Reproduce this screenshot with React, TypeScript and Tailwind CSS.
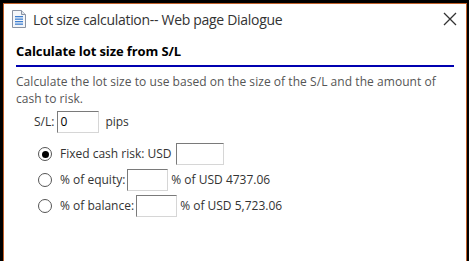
import React from "react";

const font = { fontFamily: '"Open Sans", "Noto Sans", sans-serif' };

function DocIcon() {
  return (
    <svg width="14" height="18" viewBox="0 0 14 18">
      <path d="M0.5 0.5 H9.5 L13.5 4.5 V17.5 H0.5 Z" fill="#f4f6f9" stroke="#8a93a3" />
      <path d="M9.5 0.5 V4.5 H13.5" fill="#dfe4ea" stroke="#8a93a3" />
      <rect x="3" y="6" width="8" height="1.3" fill="#3f7fd0" />
      <rect x="3" y="8.5" width="8" height="1.3" fill="#3f7fd0" />
      <rect x="3" y="11" width="8" height="1.3" fill="#3f7fd0" />
      <rect x="3" y="13.5" width="8" height="1.3" fill="#3f7fd0" />
    </svg>
  );
}

function CloseIcon() {
  return (
    <svg width="14" height="14" viewBox="0 0 14 14">
      <path d="M1 1 L13 13 M13 1 L1 13" stroke="#333" strokeWidth="1.3" />
    </svg>
  );
}

function Box({ w }: { w: string }) {
  return (
    <div
      className={`${w} h-[22px] bg-white border border-t-[#7a7a7a] border-l-[#7a7a7a] border-r-[#d6d6d6] border-b-[#d6d6d6]`}
    />
  );
}

function Radio({ checked }: { checked?: boolean }) {
  return (
    <div className="w-[14px] h-[14px] rounded-full border border-[#555] bg-white flex items-center justify-center">
      {checked && <div className="w-[7px] h-[7px] rounded-full bg-black" />}
    </div>
  );
}

export default function App() {
  return (
    <div className="w-[469px] h-[261px] bg-black overflow-hidden pt-[3px] pl-[3px]" style={font}>
      <div className="w-[464px] h-[270px] bg-white border border-[#c0602a]">
        <div className="h-[30px] flex items-center pl-[8px] pr-[9px]">
          <DocIcon />
          <span className="ml-[7px] text-[14px] text-[#333] tracking-[-0.3px]">
            Lot size calculation-- Web page Dialogue
          </span>
          <div className="ml-auto">
            <CloseIcon />
          </div>
        </div>
        <div className="pl-[12px] pr-[12px] pt-[8px]">
          <div className="text-[13px] font-bold text-black leading-[18px] tracking-[-0.1px]">
            Calculate lot size from S/L
          </div>
          <div className="h-[2px] bg-[#0000b0] mt-[5px]" />
          <div className="mt-[6px] text-[12px] leading-[17px] text-[#555] tracking-[0.05px]">
            Calculate the lot size to use based on the size of the S/L and the amount of cash to risk.
          </div>
          <div className="mt-[4px] pl-[18px] flex items-center text-[12px] text-[#333]">
            <span>S/L:</span>
            <div className="ml-[3px] w-[42px] h-[22px] bg-white border border-t-[#7a7a7a] border-l-[#7a7a7a] border-r-[#d6d6d6] border-b-[#d6d6d6] text-[12px] leading-[20px] pl-[2px] text-black">
              0
            </div>
            <span className="ml-[6px]">pips</span>
          </div>
          <div className="mt-[10px] pl-[22px] flex flex-col gap-[4px] text-[12px] text-[#333]">
            <div className="flex items-center">
              <Radio checked />
              <span className="ml-[8px]">Fixed cash risk: USD</span>
              <div className="ml-[4px]"><Box w="w-[48px]" /></div>
            </div>
            <div className="flex items-center">
              <Radio />
              <span className="ml-[8px]">% of equity:</span>
              <div className="ml-[2px]"><Box w="w-[41px]" /></div>
              <span className="ml-[3px]">% of USD 4737.06</span>
            </div>
            <div className="flex items-center">
              <Radio />
              <span className="ml-[8px]">% of balance:</span>
              <div className="ml-[2px]"><Box w="w-[41px]" /></div>
              <span className="ml-[3px]">% of USD 5,723.06</span>
            </div>
          </div>
        </div>
      </div>
    </div>
  );
}
